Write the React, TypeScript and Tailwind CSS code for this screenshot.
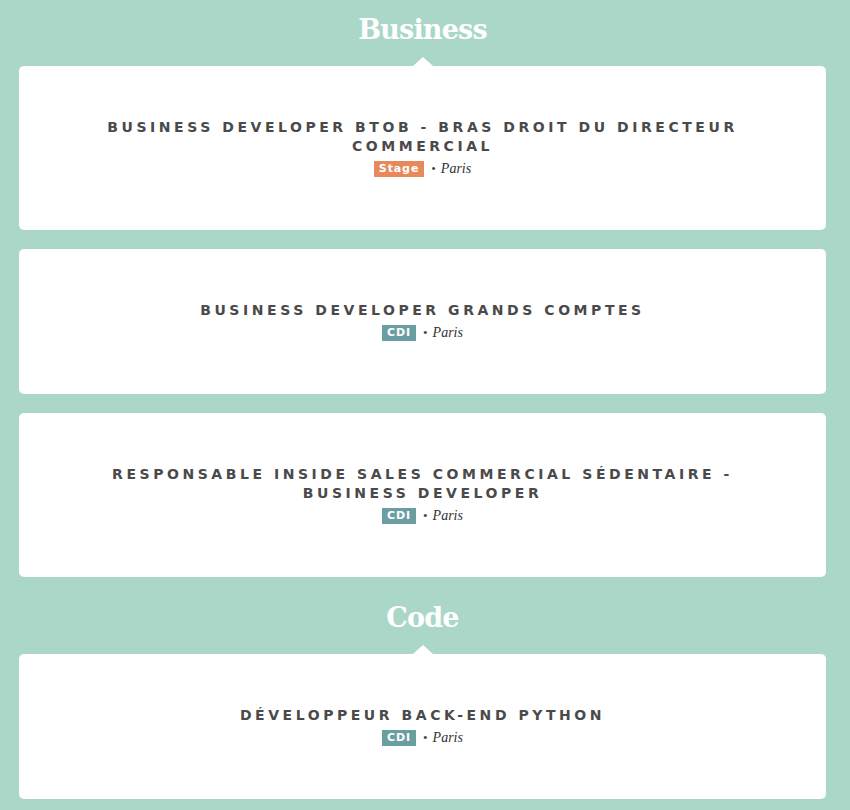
import React from "react";

type Job = { title: string; type: "Stage" | "CDI"; city: string };

const sections: { name: string; jobs: Job[] }[] = [
  {
    name: "Business",
    jobs: [
      { title: "Business Developer BtoB - Bras droit du directeur commercial", type: "Stage", city: "Paris" },
      { title: "Business Developer Grands Comptes", type: "CDI", city: "Paris" },
      { title: "Responsable Inside Sales Commercial Sédentaire - Business Developer", type: "CDI", city: "Paris" },
    ],
  },
  {
    name: "Code",
    jobs: [{ title: "Développeur Back-End Python", type: "CDI", city: "Paris" }],
  },
];

function Card({ job, pointer }: { job: Job; pointer: boolean }) {
  return (
    <div className="relative bg-white rounded-[5px] px-[60px] pt-[52px] pb-[53px] flex flex-col items-center">
      {pointer && (
        <div className="absolute -top-[9px] left-1/2 -translate-x-1/2 w-0 h-0 border-l-[10px] border-r-[10px] border-b-[9px] border-l-transparent border-r-transparent border-b-white" />
      )}
      <h3
        className="text-center uppercase font-bold text-[14px] leading-[19px] tracking-[3.55px] text-[#4a4a4a]"
        style={{ fontFamily: '"DejaVu Sans", "Liberation Sans", sans-serif' }}
      >
        {job.title}
      </h3>
      <div className="mt-[5px] flex items-center h-[16px]">
        <span
          className={
            "h-[16px] px-[5px] flex items-center text-white font-bold text-[11px] leading-[16px] tracking-[0.9px] " +
            (job.type === "Stage" ? "bg-[#e8895b]" : "bg-[#6b9ea3]")
          }
          style={{ fontFamily: '"DejaVu Sans", "Liberation Sans", sans-serif' }}
        >
          {job.type}
        </span>
        <span
          className="ml-[7px] text-[13px] leading-[16px] text-[#444]"
          style={{ fontFamily: '"Liberation Serif", serif' }}
        >
          •
        </span>
        <span
          className="ml-[5px] italic text-[14px] leading-[16px] text-[#333]"
          style={{ fontFamily: '"Liberation Serif", serif' }}
        >
          {job.city}
        </span>
      </div>
    </div>
  );
}

export default function App() {
  return (
    <div className="w-[850px] h-[810px] overflow-hidden bg-[#aad7c8]">
      <div className="-mt-[11px] pl-[19px] pr-[24px] flex flex-col">
        {sections.map((s) => (
          <section key={s.name} className="flex flex-col">
            <h2
              className="h-[77px] pt-[6px] flex items-center justify-center text-white font-bold text-[27px] tracking-[-0.8px]"
              style={{ fontFamily: '"DejaVu Serif", "Liberation Serif", serif' }}
            >
              {s.name}
            </h2>
            <div className="flex flex-col gap-[19px]">
              {s.jobs.map((j, i) => (
                <Card key={j.title} job={j} pointer={i === 0} />
              ))}
            </div>
          </section>
        ))}
      </div>
    </div>
  );
}
